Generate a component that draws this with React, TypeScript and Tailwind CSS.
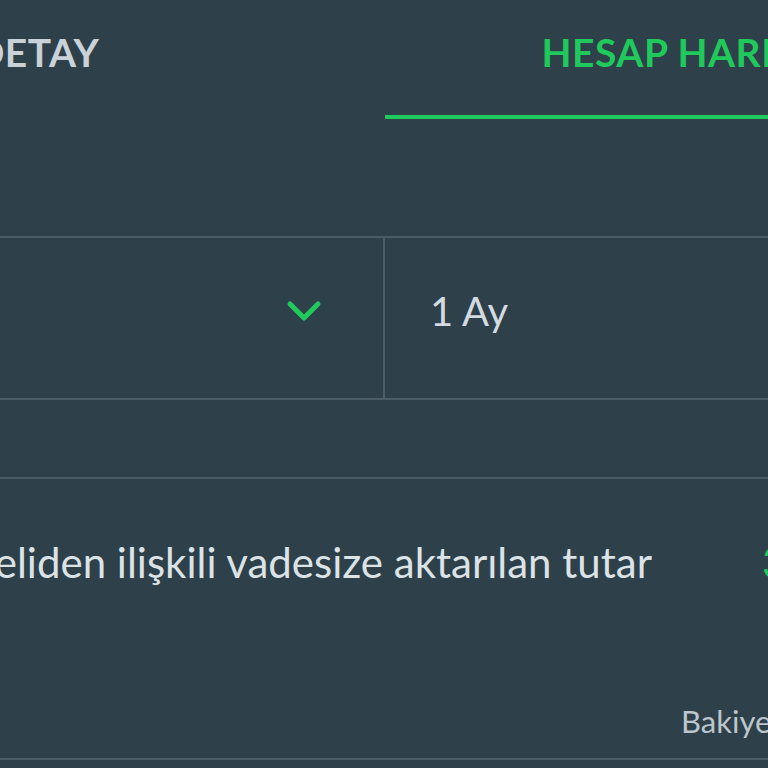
import React from 'react';

function Chevron() {
  return (
    <svg width="36" height="24" viewBox="0 0 36 24" fill="none">
      <polyline
        points="4,5 18,19 32,5"
        stroke="#1fc95c"
        strokeWidth="5"
        strokeLinecap="round"
        strokeLinejoin="round"
      />
    </svg>
  );
}

export default function App() {
  return (
    <div className="w-[768px] h-[768px] overflow-hidden bg-[#2e404a] font-['Lato',sans-serif]">
      <div className="-ml-[305px] w-[1381px]">
        {/* Tabs */}
        <div className="flex h-[119px]">
          <div className="w-[690px] flex justify-center pt-[33px] pr-[6px]">
            <span className="text-[39px] leading-none font-bold tracking-[0.5px] text-[#c9d2d8]">DETAY</span>
          </div>
          <div className="w-[691px] flex justify-center pt-[33px] pl-[20px] border-b-[4px] border-[#1fc95c]">
            <span className="text-[39px] leading-none font-bold tracking-[0.5px] text-[#1fc95c] whitespace-nowrap">
              HESAP HAREKETLERİ
            </span>
          </div>
        </div>

        {/* Filters */}
        <div className="mt-[117px] flex h-[164px] border-y-2 border-[#4b5c66]">
          <div className="w-[690px] flex items-center justify-end pr-[61px] pb-[14px] border-r-2 border-[#4b5c66]">
            <Chevron />
          </div>
          <div className="flex-1 flex items-center pl-[45px] pb-[14px]">
            <span className="text-[40px] leading-none text-[#d3dbe0]">1 Ay</span>
          </div>
        </div>

        {/* Transaction */}
        <div className="mt-[77px] border-t-2 border-[#4b5c66] h-[283px] border-b-2 flex flex-col">
          <div className="flex items-start pt-[62px]">
            <span className="w-[957px] text-right whitespace-nowrap text-[42px] leading-none text-[#dce3e7]">
              Vadeliden ilişkili vadesize aktarılan tutar
            </span>
            <span className="ml-[110px] whitespace-nowrap text-[42px] leading-none text-[#1fc95c]">
              3.000,00 TL
            </span>
          </div>
          <div className="mt-auto mb-[19px] pl-[986px]">
            <span className="whitespace-nowrap text-[31px] leading-none text-[#bcc6cc]">Bakiye: 12.450,75 TL</span>
          </div>
        </div>
      </div>
    </div>
  );
}
